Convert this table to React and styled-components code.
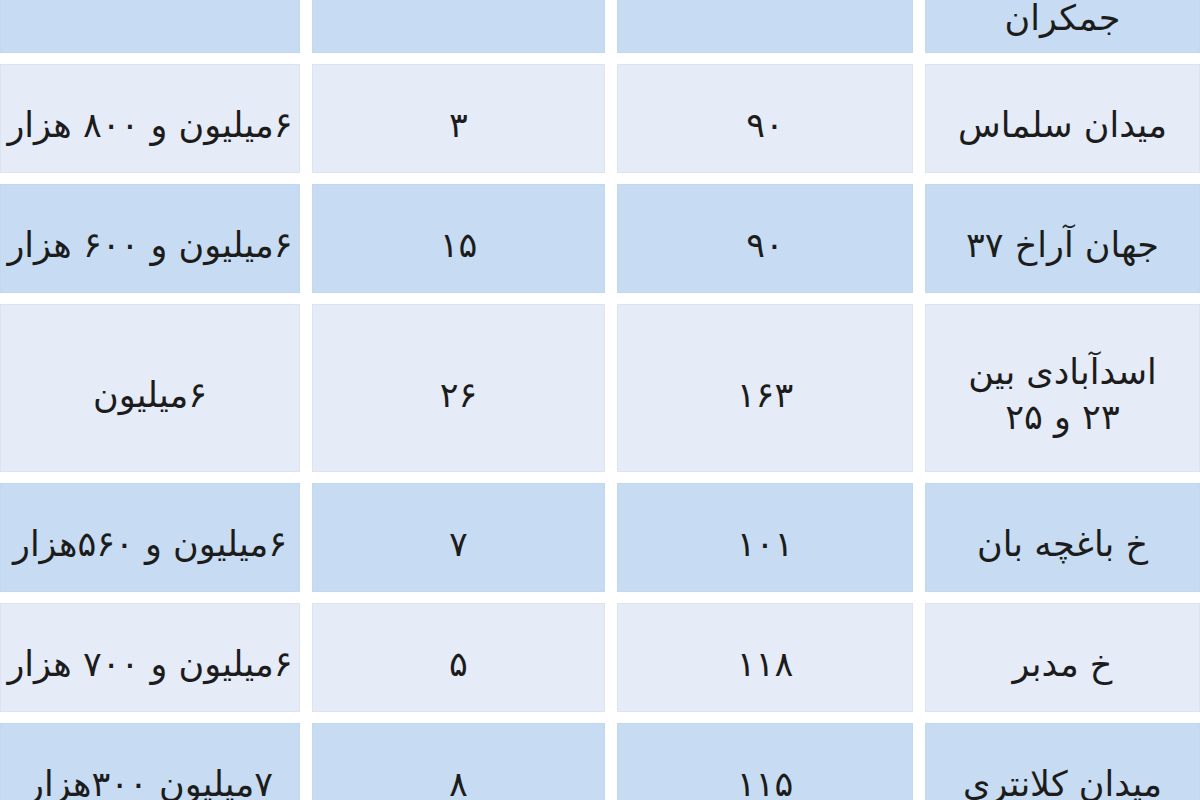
import styled, {createGlobalStyle} from 'styled-components'

const GlobalStyle = createGlobalStyle`
  html, body {
    margin: 0;
    padding: 0;
    background: #ffffff;
  }
`

const Page = styled.div`
  width: 1200px;
  height: 800px;
  overflow: hidden;
  background: #ffffff;
  font-family: 'DejaVu Sans', 'Noto Sans', sans-serif;
`

const Table = styled.div`
  direction: rtl;
  display: grid;
  grid-template-columns: 275px 296px 293px 300px;
  column-gap: 12px;
  row-gap: 11px;
  margin-top: -68px;
`

const Cell = styled.div`
  display: flex;
  align-items: center;
  justify-content: center;
  box-sizing: border-box;
  padding: ${(p) => (p.$first ? '6px' : '14px')} 0 ${(p) => (p.$raised ? '40px' : '0')};
  text-align: center;
  white-space: pre-line;
  font-size: 35px;
  line-height: 45px;
  color: #1c1c1c;
  background: ${(p) => (p.$tone === 'blue' ? '#c7dcf2' : '#e5ebf7')};
  border: 1px solid ${(p) => (p.$tone === 'blue' ? '#c2d8ef' : '#dde4f0')};
  overflow: visible;
`

const rows = [
  {loc: 'بلوار\nجمکران', area: '۱۲۰', count: '۱۰', price: '۶میلیون و ۹۰۰ هزار', height: 121},
  {loc: 'میدان سلماس', area: '۹۰', count: '۳', price: '۶میلیون و ۸۰۰ هزار'},
  {loc: 'جهان آراخ ۳۷', area: '۹۰', count: '۱۵', price: '۶میلیون و ۶۰۰ هزار'},
  {loc: 'اسدآبادی بین\n۲۳ و ۲۵', area: '۱۶۳', count: '۲۶', price: '۶میلیون', height: 168},
  {loc: 'خ باغچه بان', area: '۱۰۱', count: '۷', price: '۶میلیون و ۵۶۰هزار'},
  {loc: 'خ مدبر', area: '۱۱۸', count: '۵', price: '۶میلیون و ۷۰۰ هزار'},
  {loc: 'میدان کلانتری', area: '۱۱۵', count: '۸', price: '۷میلیون ۳۰۰هزار'},
]

export default function App() {
  return (
    <Page>
      <GlobalStyle />
      <Table style={{gridTemplateRows: rows.map((r) => `${r.height || 109}px`).join(' ')}}>
        {rows.map((row, i) => {
          const tone = i % 2 === 0 ? 'blue' : 'light'
          return [row.loc, row.area, row.count, row.price].map((text, j) => (
            <Cell
              key={`${i}-${j}`}
              $tone={tone}
              $first={i === 0}
              $raised={i === 0 && j > 0}>
              {text}
            </Cell>
          ))
        })}
      </Table>
    </Page>
  )
}
